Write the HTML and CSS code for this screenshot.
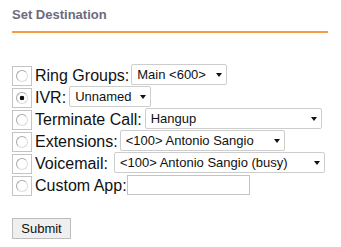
FILE: index.html
```html
<!DOCTYPE html>
<html lang="en">
<head>
    <meta charset="UTF-8">
    <meta name="viewport" content="width=device-width, initial-scale=1.0">
    <title>Set Destination</title>
    <link rel="stylesheet" href="styles.css">
</head>
<body>
    <div class="panel">
        <h2 class="title">Set Destination</h2>

        <form class="dest-form">
            <div class="row">
                <span class="radio-box"><input type="radio" name="dest" value="ringgroup"></span>
                <label class="label">Ring Groups:</label>
                <span class="select-wrap gap-2"><select class="sel sel-ring"><option>Main &lt;600&gt;</option></select></span>
            </div>
            <div class="row">
                <span class="radio-box"><input type="radio" name="dest" value="ivr" checked></span>
                <label class="label">IVR:</label>
                <span class="select-wrap gap-3"><select class="sel sel-ivr"><option>Unnamed</option></select></span>
            </div>
            <div class="row">
                <span class="radio-box"><input type="radio" name="dest" value="terminate"></span>
                <label class="label">Terminate Call:</label>
                <span class="select-wrap gap-3"><select class="sel sel-term"><option>Hangup</option></select></span>
            </div>
            <div class="row">
                <span class="radio-box"><input type="radio" name="dest" value="extension"></span>
                <label class="label">Extensions:</label>
                <span class="select-wrap gap-2"><select class="sel sel-ext"><option>&lt;100&gt; Antonio Sangio</option></select></span>
            </div>
            <div class="row">
                <span class="radio-box"><input type="radio" name="dest" value="voicemail"></span>
                <label class="label">Voicemail:</label>
                <span class="select-wrap gap-6"><select class="sel sel-vm"><option>&lt;100&gt; Antonio Sangio (busy)</option></select></span>
            </div>
            <div class="row">
                <span class="radio-box"><input type="radio" name="dest" value="custom"></span>
                <label class="label">Custom App:</label>
                <input type="text" class="custom-input">
            </div>

            <button type="button" class="submit">Submit</button>
        </form>
    </div>
</body>
</html>
```

FILE: styles.css
```css
body {
    margin: 0;
    background-color: #fff;
    font-family: "Liberation Sans", Arial, sans-serif;
    color: #111;
}
.panel {
    margin: 0 13px 0 12px;
}
.title {
    margin: 0;
    padding: 7px 0 8px 0;
    font-size: 13px;
    line-height: 16px;
    font-weight: bold;
    color: #6b6b7c;
    border-bottom: 2px solid #f59b40;
}
.dest-form {
    margin-top: 31px;
    display: flex;
    flex-direction: column;
    align-items: flex-start;
    gap: 1px;
}
.row {
    display: flex;
    align-items: flex-start;
    height: 21px;
}
.radio-box {
    width: 18px;
    height: 18px;
    margin-top: 2px;
    border: 1px solid #c4c4c4;
    background-color: #fff;
    display: flex;
    align-items: center;
    justify-content: center;
}
.radio-box input {
    appearance: none;
    -webkit-appearance: none;
    margin: 0;
    width: 12px;
    height: 12px;
    border-radius: 50%;
    border: 1px solid #a9a9a9;
    border-right-color: #dcdcdc;
    border-bottom-color: #dcdcdc;
    background-color: #fff;
}
.radio-box input:checked {
    background: radial-gradient(circle, #111 0, #111 2px, #fff 2.6px);
}
.label {
    margin-left: 3px;
    font-size: 16px;
    line-height: 21px;
    height: 21px;
    margin-top: 1px;
}
.select-wrap {
    position: relative;
    display: inline-block;
}
.gap-2 { margin-left: 2px; }
.gap-3 { margin-left: 3px; }
.gap-6 { margin-left: 6px; }
.select-wrap::after {
    content: "";
    position: absolute;
    right: 5px;
    top: 9px;
    border-left: 3.5px solid transparent;
    border-right: 3.5px solid transparent;
    border-top: 4px solid #111;
    pointer-events: none;
}
.sel {
    appearance: none;
    -webkit-appearance: none;
    box-sizing: border-box;
    height: 21px;
    margin: 0;
    padding: 0 18px 0 5px;
    border: 1px solid #cdcdcd;
    border-radius: 2px;
    background-color: #fff;
    font-family: "Liberation Sans", Arial, sans-serif;
    font-size: 13px;
    color: #111;
}
.sel-ring { width: 96px; }
.sel-ivr { width: 82px; }
.sel-term { width: 177px; }
.sel-ext { width: 165px; }
.sel-vm { width: 211px; }
.custom-input {
    box-sizing: border-box;
    width: 123px;
    height: 20px;
    margin: 1px 0 0 0;
    padding: 0 3px;
    border: 1px solid #c4c4c4;
    font-family: "Liberation Sans", Arial, sans-serif;
    font-size: 13px;
}
.submit {
    margin-top: 22px;
    width: 59px;
    height: 21px;
    padding: 0;
    border: 1px solid #bdbdbd;
    border-radius: 0;
    background-color: #efefef;
    font-family: "Liberation Sans", Arial, sans-serif;
    font-size: 13px;
    color: #111;
}
```
